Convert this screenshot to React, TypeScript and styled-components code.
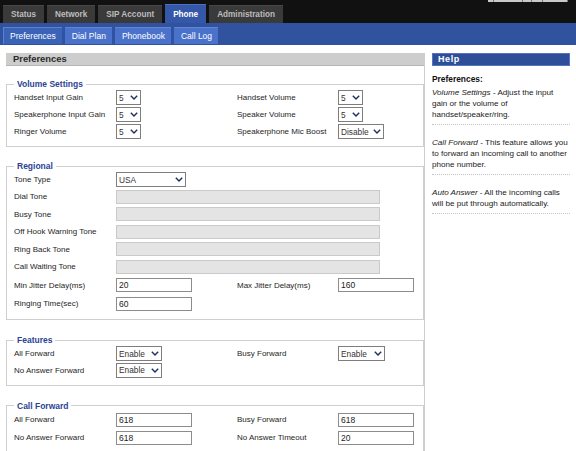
import React from 'react'
import styled, { createGlobalStyle } from 'styled-components'

const GlobalStyle = createGlobalStyle`
  html, body {
    margin: 0;
    padding: 0;
    background: #fff;
  }
  body {
    font-family: "Liberation Sans", Arial, sans-serif;
    font-size: 8px;
    color: #222;
  }
`

const Page = styled.div`
  width: 576px;
  height: 451px;
  overflow: hidden;
  background: #fff;
`

const TopBar = styled.div`
  background: #111;
  height: 23px;
  display: flex;
  flex-direction: column;
  justify-content: space-between;
`

const TopStrip = styled.div`
  height: 3px;
  display: flex;
  justify-content: flex-end;
  padding-right: 8px;
`

const StripBox = styled.div<{ $w: number }>`
  width: ${(p) => p.$w}px;
  height: 2px;
  background: #c9c9c9;
  border-right: 1px solid #777;
  box-sizing: border-box;
`

const TabRow = styled.div`
  display: flex;
  align-items: flex-end;
  gap: 3px;
  padding-left: 3px;
`

const Tab = styled.div<{ $active?: boolean }>`
  height: ${(p) => (p.$active ? 19 : 18)}px;
  box-sizing: border-box;
  padding: 0 8px;
  display: flex;
  align-items: center;
  background: ${(p) => (p.$active ? '#3457a7' : '#3a3a3a')};
  border-top: 1px solid ${(p) => (p.$active ? '#4b6dc2' : '#474747')};
  color: ${(p) => (p.$active ? '#fff' : '#bdbdbd')};
  font-weight: bold;
  font-size: 8.2px;
`

const SubBar = styled.div`
  height: 22px;
  box-sizing: border-box;
  background: #30529f;
  display: flex;
  align-items: flex-end;
  gap: 3px;
  padding: 0 3px 1px;
`

const SubTab = styled.div<{ $active?: boolean }>`
  height: 17px;
  box-sizing: border-box;
  padding: 0 6px;
  display: flex;
  align-items: center;
  background: ${(p) => (p.$active ? '#3a62b6' : '#4b72ca')};
  border-top: 1px solid ${(p) => (p.$active ? '#5c80d0' : '#6186d6')};
  border-left: 1px solid ${(p) => (p.$active ? '#5c80d0' : '#4b72ca')};
  color: #fff;
  font-size: 8.5px;
`

const Main = styled.div`
  display: flex;
  gap: 7px;
  padding: 8px 6px 0;
  height: 406px;
  box-sizing: border-box;
`

const LeftCol = styled.div`
  width: 419px;
  box-sizing: border-box;
  border-right: 1px solid #cdcdcd;
  display: flex;
  flex-direction: column;
`

const SectionHeader = styled.div`
  height: 13px;
  box-sizing: border-box;
  background: #cdcdcd;
  border-bottom: 1px solid #b5b5b5;
  padding-left: 7px;
  font-weight: bold;
  font-size: 9.4px;
  line-height: 12px;
  color: #2a2a2a;
`

const FieldGroup = styled.fieldset<{ $mt: number }>`
  margin: ${(p) => p.$mt}px 0 0;
  padding: 0 7px 6px;
  border: 1px solid #cfcfcf;
  min-width: 0;
`

const Legend = styled.legend`
  padding: 0 3px;
  font-weight: bold;
  font-size: 8.5px;
  line-height: 10px;
  color: #2b4394;
`

const FormRow = styled.div<{ $h: number }>`
  display: grid;
  grid-template-columns: 102px 121px 101px 1fr;
  align-items: center;
  height: ${(p) => p.$h}px;
`

const Label = styled.span`
  font-size: 8px;
  color: #1e1e1e;
  white-space: nowrap;
`

const TextInput = styled.input<{ $wide?: boolean }>`
  width: ${(p) => (p.$wide ? 264 : 76)}px;
  height: 14px;
  box-sizing: border-box;
  margin: 0;
  padding: 0 2px;
  border: 1px solid ${(p) => (p.$wide ? '#cacaca' : '#8c8c8c')};
  background: ${(p) => (p.$wide ? '#e4e4e4' : '#fff')};
  font-family: "Liberation Sans", Arial, sans-serif;
  font-size: 8.5px;
  color: #222;
  outline: none;
  grid-column: ${(p) => (p.$wide ? '2 / span 3' : 'auto')};
`

const SelectBox = styled.div<{ $w: number }>`
  width: ${(p) => p.$w}px;
  height: 15px;
  box-sizing: border-box;
  border: 1px solid #7e7e7e;
  background: #fff;
  display: flex;
  align-items: center;
  justify-content: space-between;
  padding: 0 2px 0 2px;
  font-size: 8.3px;
  color: #333;
  white-space: nowrap;
`

const HelpCol = styled.div`
  width: 138px;
  display: flex;
  flex-direction: column;
`

const HelpHeader = styled.div`
  height: 13px;
  box-sizing: border-box;
  background: #2e4e9a;
  border: 1px solid #5473c0;
  padding-left: 5px;
  color: #fff;
  font-weight: bold;
  font-size: 9px;
  letter-spacing: 0.6px;
  line-height: 11px;
`

const HelpTitle = styled.div`
  margin-top: 8px;
  font-weight: bold;
  font-size: 8.4px;
  line-height: 11px;
  color: #111;
`

const HelpItem = styled.div<{ $first?: boolean }>`
  padding: ${(p) => (p.$first ? 2 : 12)}px 0 4px;
  border-bottom: 1px dotted #c4c4c4;
  font-size: 8.1px;
  line-height: 11px;
  color: #222;
  white-space: nowrap;
  & i {
    font-style: italic;
  }
`

const Chevron = () => (
  <svg width="8" height="5" viewBox="0 0 8 5">
    <polyline points="0.8,0.8 4,4 7.2,0.8" fill="none" stroke="#1f2d5c" strokeWidth="1.4" />
  </svg>
)

const Select: React.FC<{ value: string; width: number }> = ({ value, width }) => (
  <SelectBox $w={width}>
    <span>{value}</span>
    <Chevron />
  </SelectBox>
)

const tones = ['Dial Tone', 'Busy Tone', 'Off Hook Warning Tone', 'Ring Back Tone', 'Call Waiting Tone']

export default function App() {
  return (
    <Page>
      <GlobalStyle />
      <TopBar>
        <TopStrip>
          <StripBox $w={6} />
          <StripBox $w={29} />
          <StripBox $w={9} />
          <StripBox $w={11} />
          <StripBox $w={25} />
        </TopStrip>
        <TabRow>
          <Tab>Status</Tab>
          <Tab>Network</Tab>
          <Tab>SIP Account</Tab>
          <Tab $active>Phone</Tab>
          <Tab>Administration</Tab>
        </TabRow>
      </TopBar>
      <SubBar>
        <SubTab $active>Preferences</SubTab>
        <SubTab>Dial Plan</SubTab>
        <SubTab>Phonebook</SubTab>
        <SubTab>Call Log</SubTab>
      </SubBar>

      <Main>
        <LeftCol>
          <SectionHeader>Preferences</SectionHeader>

          <FieldGroup $mt={13}>
            <Legend>Volume Settings</Legend>
            <FormRow $h={17}>
              <Label>Handset Input Gain</Label>
              <Select value="5" width={25} />
              <Label>Handset Volume</Label>
              <Select value="5" width={25} />
            </FormRow>
            <FormRow $h={17}>
              <Label>Speakerphone Input Gain</Label>
              <Select value="5" width={25} />
              <Label>Speaker Volume</Label>
              <Select value="5" width={25} />
            </FormRow>
            <FormRow $h={17}>
              <Label>Ringer Volume</Label>
              <Select value="5" width={25} />
              <Label>Speakerphone Mic Boost</Label>
              <Select value="Disable" width={46} />
            </FormRow>
          </FieldGroup>

          <FieldGroup $mt={14}>
            <Legend>Regional</Legend>
            <FormRow $h={17}>
              <Label>Tone Type</Label>
              <Select value="USA" width={70} />
            </FormRow>
            {tones.map((t) => (
              <FormRow key={t} $h={17.5}>
                <Label>{t}</Label>
                <TextInput $wide disabled readOnly value="" />
              </FormRow>
            ))}
            <FormRow $h={19}>
              <Label>Min Jitter Delay(ms)</Label>
              <TextInput readOnly value="20" />
              <Label>Max Jitter Delay(ms)</Label>
              <TextInput readOnly value="160" />
            </FormRow>
            <FormRow $h={18.5}>
              <Label>Ringing Time(sec)</Label>
              <TextInput readOnly value="60" />
            </FormRow>
          </FieldGroup>

          <FieldGroup $mt={15}>
            <Legend>Features</Legend>
            <FormRow $h={17}>
              <Label>All Forward</Label>
              <Select value="Enable" width={46} />
              <Label>Busy Forward</Label>
              <Select value="Enable" width={47} />
            </FormRow>
            <FormRow $h={16.5}>
              <Label>No Answer Forward</Label>
              <Select value="Enable" width={46} />
            </FormRow>
          </FieldGroup>

          <FieldGroup $mt={15}>
            <Legend>Call Forward</Legend>
            <FormRow $h={18}>
              <Label>All Forward</Label>
              <TextInput readOnly value="618" />
              <Label>Busy Forward</Label>
              <TextInput readOnly value="618" />
            </FormRow>
            <FormRow $h={18}>
              <Label>No Answer Forward</Label>
              <TextInput readOnly value="618" />
              <Label>No Answer Timeout</Label>
              <TextInput readOnly value="20" />
            </FormRow>
          </FieldGroup>
        </LeftCol>

        <HelpCol>
          <HelpHeader>Help</HelpHeader>
          <HelpTitle>Preferences:</HelpTitle>
          <HelpItem $first>
            <i>Volume Settings</i> - Adjust the input
            <br />
            gain or the volume of
            <br />
            handset/speaker/ring.
          </HelpItem>
          <HelpItem>
            <i>Call Forward</i> - This feature allows you
            <br />
            to forward an incoming call to another
            <br />
            phone number.
          </HelpItem>
          <HelpItem>
            <i>Auto Answer</i> - All the incoming calls
            <br />
            will be put through automatically.
          </HelpItem>
        </HelpCol>
      </Main>
    </Page>
  )
}
